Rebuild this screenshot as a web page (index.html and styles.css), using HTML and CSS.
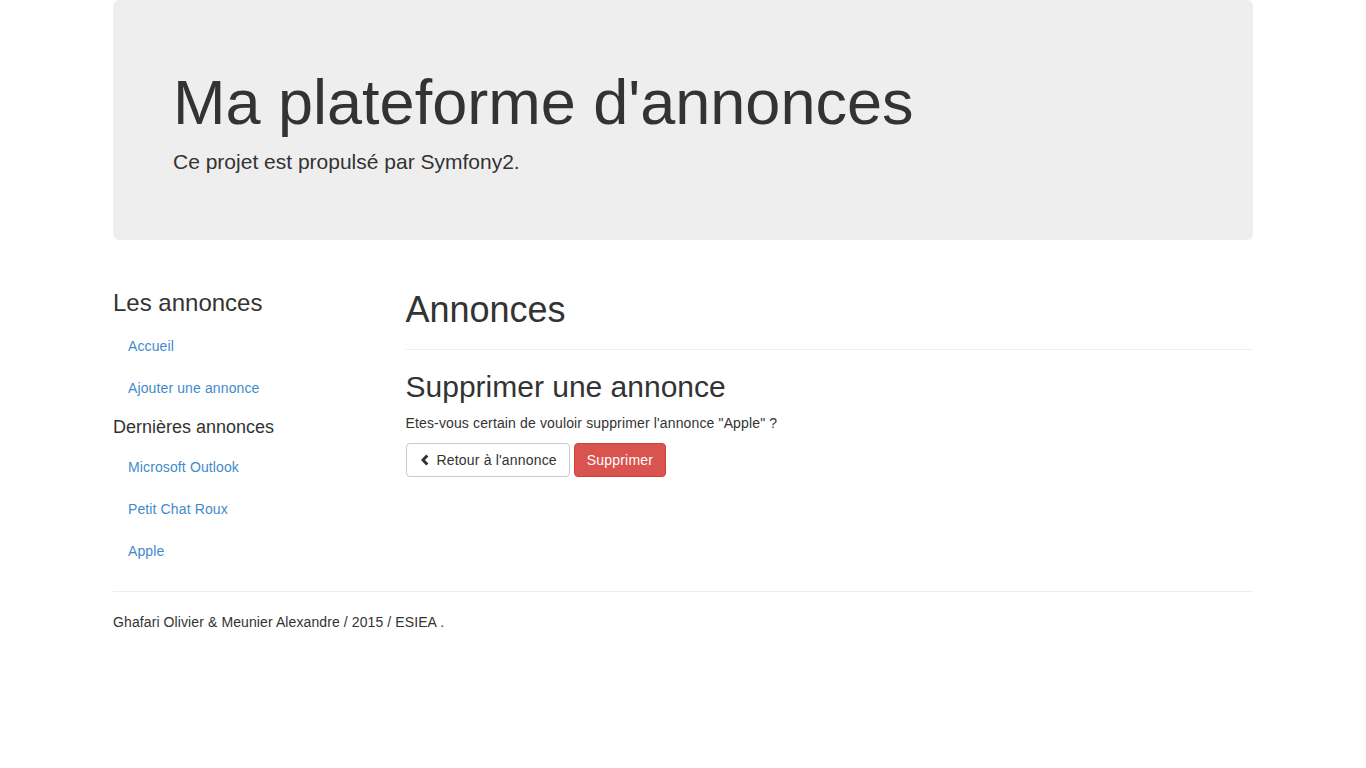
FILE: index.html
```html
<!DOCTYPE html>
<html lang="fr">
<head>
<meta charset="utf-8">
<title>Ma plateforme d'annonces</title>
<link rel="stylesheet" href="styles.css">
</head>
<body>
<div class="container">
  <div class="jumbotron">
    <h1>Ma plateforme d'annonces</h1>
    <p>Ce projet est propulsé par Symfony2.</p>
  </div>
  <div class="row">
    <div class="col-side">
      <h3>Les annonces</h3>
      <ul class="nav">
        <li><a href="#">Accueil</a></li>
        <li><a href="#">Ajouter une annonce</a></li>
      </ul>
      <h4>Dernières annonces</h4>
      <ul class="nav">
        <li><a href="#">Microsoft Outlook</a></li>
        <li><a href="#">Petit Chat Roux</a></li>
        <li><a href="#">Apple</a></li>
      </ul>
    </div>
    <div class="col-main">
      <div class="page-header">
        <h1>Annonces</h1>
      </div>
      <h2>Supprimer une annonce</h2>
      <p class="text">Etes-vous certain de vouloir supprimer l'annonce "Apple" ?</p>
      <div class="actions">
        <a href="#" class="btn btn-default"><svg class="glyph" viewBox="0 0 8 12" width="8" height="12"><path d="M5.2 0.4 L7.4 2.6 L4 6 L7.4 9.4 L5.2 11.6 L0 6 Z" fill="#333"/></svg>Retour à l'annonce</a>
        <a href="#" class="btn btn-danger">Supprimer</a>
      </div>
    </div>
  </div>
  <footer>
    <hr>
    <p class="foot">Ghafari Olivier &amp; Meunier Alexandre / 2015 / ESIEA .</p>
  </footer>
</div>
</body>
</html>
```

FILE: styles.css
```css
* { box-sizing: border-box; }
html, body { margin: 0; padding: 0; }
body {
  font-family: "Liberation Sans", Arial, Helvetica, sans-serif;
  font-size: 14px;
  line-height: 1.42857143;
  color: #333;
  background: #fff;
}
a { color: #428bca; text-decoration: none; }
p { margin: 0 0 10px; }
.text { letter-spacing: 0.14px; }
.foot { letter-spacing: 0.1px; }
h1, h2, h3, h4 { font-weight: 500; line-height: 1.1; color: inherit; }
.container {
  width: 1170px;
  margin: 0 auto;
  padding: 0 15px;
}
.jumbotron {
  background: #eee;
  border-radius: 6px;
  padding: 48px 60px;
  margin-bottom: 30px;
}
.jumbotron h1 {
  font-size: 63px;
  margin: 20px 0 10px;
}
.jumbotron p {
  font-size: 21px;
  font-weight: 200;
  margin: 0 0 15px;
  line-height: 1.42857143;
}
.row {
  display: flex;
  margin: 0 -15px;
}
.col-side {
  width: 292.5px;
  padding: 0 15px;
}
.col-main {
  width: 877.5px;
  padding: 0 15px;
}
h3 { font-size: 24px; margin: 20px 0 9px; }
h4 { font-size: 18px; margin: 10px 0 10px; }
.nav {
  list-style: none;
  margin: 0;
  padding: 0;
  display: flex;
  flex-direction: column;
  gap: 2px;
}
.nav a {
  display: block;
  padding: 10px 15px;
  line-height: 20px;
  border-radius: 4px;
  letter-spacing: 0.12px;
}
.page-header {
  padding-bottom: 9px;
  margin: 0 0 20px;
  border-bottom: 1px solid #eee;
}
.page-header h1 {
  font-size: 36px;
  margin: 20px 0 10px;
}
h2 { font-size: 30px; margin: 20px 0 10px; }
.actions { display: flex; gap: 4px; }
.btn {
  display: inline-flex;
  align-items: center;
  padding: 6px 12px;
  font-size: 14px;
  line-height: 20px;
  border: 1px solid transparent;
  border-radius: 4px;
  white-space: nowrap;
  letter-spacing: 0.18px;
}
.btn-default { color: #333; background: #fff; border-color: #ccc; }
.btn-danger { color: #fff; background: #d9534f; border-color: #d43f3a; }
.glyph { margin-left: 2px; margin-right: 8px; flex: none; }
footer hr {
  margin: 20px 0;
  border: 0;
  border-top: 1px solid #eee;
}
footer p { margin: 0 0 10px; }
```
